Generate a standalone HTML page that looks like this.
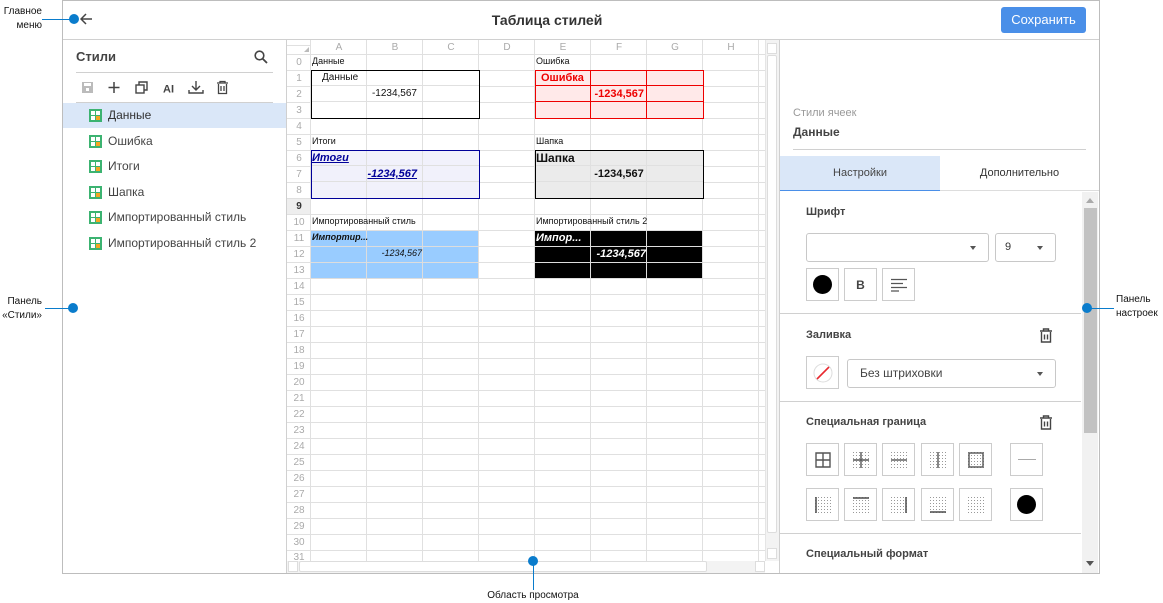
<!DOCTYPE html>
<html><head><meta charset="utf-8"><style>
*{box-sizing:border-box;margin:0;padding:0}
body{width:1163px;height:602px;background:#fff;font-family:"Liberation Sans",Arial,sans-serif;position:relative;overflow:hidden;color:#333}
.a{position:absolute}
.frame{left:62px;top:0;width:1038px;height:574px;border:1px solid #bdbdbd}
.ann{font-size:10px;color:#111;line-height:14px}
.dot{width:10px;height:10px;border-radius:50%;background:#0a7ccc}
.hl{height:1px;background:#0a7ccc}
.vl{width:1px;background:#0a7ccc}
.rn{position:absolute;left:287px;width:24px;text-align:center;font-size:10px;color:#aaa;height:16px;line-height:16px}
.ch{position:absolute;top:40px;height:15px;line-height:15px;width:56px;text-align:center;font-size:10px;color:#aaa}
.t{position:absolute;font-size:9px;color:#111;white-space:nowrap;line-height:16px}
.li{position:absolute;left:63px;width:223px;height:25px;font-size:12px;color:#444;line-height:25px;padding-left:45px}
.li svg{position:absolute;left:26px;top:6px}
.btn{position:absolute;width:33px;height:33px;border:1px solid #ccc;background:#fff;display:flex;align-items:center;justify-content:center}
.sel{position:absolute;border:1px solid #c8c8c8;border-radius:3px;height:29px;font-size:11px;color:#333;line-height:27px;padding-left:12px}
.sel:after{content:"";position:absolute;right:12px;top:12px;border-left:3px solid transparent;border-right:3px solid transparent;border-top:4px solid #555}
.h{position:absolute;left:806px;font-size:11px;font-weight:bold;color:#444}
.sep{position:absolute;left:780px;width:301px;height:1px;background:#d0d0d0}
.grid{background-image:repeating-linear-gradient(to right,transparent 0 55px,#e0e0e0 55px 56px),repeating-linear-gradient(to bottom,transparent 0 15px,#e0e0e0 15px 16px)}
</style></head><body>
<svg width="0" height="0" style="position:absolute"><defs><pattern id="dp" width="3" height="3" patternUnits="userSpaceOnUse"><rect width="1" height="1" fill="#999"/></pattern>
<symbol id="si" viewBox="0 0 13 13"><rect width="13" height="13" fill="#3cb371"/><rect x="2" y="2" width="4" height="4" fill="#fff"/><rect x="7" y="2" width="4" height="4" fill="#fff"/><rect x="2" y="7" width="4" height="4" fill="#fff"/><rect x="7" y="7" width="4" height="4" fill="#f5a623"/></symbol></defs></svg>

<div class="a frame"></div>
<div class="a" style="left:63px;top:39px;width:1036px;height:1px;background:#d0d0d0"></div>

<svg class="a" style="left:80px;top:13px" width="13" height="12" viewBox="0 0 13 12"><path d="M6 1L1 6L6 11M1 6H12" stroke="#444" stroke-width="1.5" fill="none"/></svg>
<div class="a" style="left:400px;width:294px;top:12px;text-align:center;font-size:14px;font-weight:bold;color:#333">Таблица стилей</div>
<div class="a" style="left:1001px;top:7px;width:85px;height:26px;background:#4a8fe8;border-radius:3px;color:#fff;font-size:13px;text-align:center;line-height:26px">Сохранить</div>

<div class="a" style="left:286px;top:40px;width:1px;height:533px;background:#d0d0d0"></div>
<div class="a" style="left:76px;top:49px;font-size:13px;font-weight:bold;color:#444">Стили</div>
<svg class="a" style="left:254px;top:50px" width="14" height="14" viewBox="0 0 14 14"><circle cx="5.5" cy="5.5" r="4.3" stroke="#444" stroke-width="1.6" fill="none"/><path d="M8.7 8.7L13 13" stroke="#444" stroke-width="1.8"/></svg>
<div class="a" style="left:76px;top:72px;width:197px;height:1px;background:#d0d0d0"></div>
<div class="a" style="left:76px;top:102px;width:197px;height:1px;background:#d0d0d0"></div>
<svg class="a" style="left:81px;top:80px" width="150" height="15" viewBox="0 0 150 15">
<rect x="1" y="2" width="11" height="11" fill="#bbb"/><rect x="3" y="3" width="7" height="3" fill="#fff"/><rect x="5" y="8" width="3" height="3" fill="#fff"/>
<path d="M33 2V13M27.5 7.5H38.5" stroke="#444" stroke-width="1.5"/>
<rect x="55" y="5" width="8" height="8" stroke="#444" stroke-width="1.4" fill="none"/><path d="M58 5V2H66V10H63" stroke="#444" stroke-width="1.4" fill="none"/>
<text x="82" y="12.5" font-family="Liberation Sans" font-weight="bold" font-size="11" fill="#444">AI</text>
<path d="M115 1V10M111 6L115 10L119 6M108 10V13H122V10" stroke="#444" stroke-width="1.4" fill="none"/>
<path d="M136 3H147M139 3V1.5H144V3M137.5 4V13.5H145.5V4M140 6V11M143 6V11" stroke="#444" stroke-width="1.3" fill="none"/>
</svg>
<div class="li" style="top:103px;background:#dae7f8;color:#333"><svg width="13" height="13"><use href="#si"/></svg>Данные</div>
<div class="li" style="top:128.5px"><svg width="13" height="13"><use href="#si"/></svg>Ошибка</div>
<div class="li" style="top:154px"><svg width="13" height="13"><use href="#si"/></svg>Итоги</div>
<div class="li" style="top:179.5px"><svg width="13" height="13"><use href="#si"/></svg>Шапка</div>
<div class="li" style="top:205px"><svg width="13" height="13"><use href="#si"/></svg>Импортированный стиль</div>
<div class="li" style="top:230.5px"><svg width="13" height="13"><use href="#si"/></svg>Импортированный стиль 2</div>

<!-- grid -->
<div class="a grid" style="left:311px;top:55px;width:454px;height:506px"></div>
<div class="a" style="left:311px;top:40px;width:454px;height:15px;border-bottom:1px solid #e0e0e0;background-image:repeating-linear-gradient(to right,transparent 0 55px,#e0e0e0 55px 56px)"></div>
<div class="a" style="left:287px;top:40px;width:24px;height:521px;border-right:1px solid #e0e0e0;background-image:repeating-linear-gradient(to bottom,transparent 0 15px,#e0e0e0 15px 16px);background-position:0 15px"></div>
<div class="a" style="left:287px;top:54px;width:24px;height:1px;background:#e0e0e0"></div>
<div class="a" style="left:287px;top:199px;width:23px;height:15px;background:#eee"></div>
<svg class="a" style="left:304px;top:47px" width="5" height="5"><path d="M5 0V5H0Z" fill="#bbb"/></svg>
<div class="ch" style="left:311px">A</div><div class="ch" style="left:367px">B</div><div class="ch" style="left:423px">C</div><div class="ch" style="left:479px">D</div><div class="ch" style="left:535px">E</div><div class="ch" style="left:591px">F</div><div class="ch" style="left:647px">G</div><div class="ch" style="left:703px">H</div>
<div class="rn" style="top:55px">0</div><div class="rn" style="top:71px">1</div><div class="rn" style="top:87px">2</div><div class="rn" style="top:103px">3</div><div class="rn" style="top:119px">4</div><div class="rn" style="top:135px">5</div><div class="rn" style="top:151px">6</div><div class="rn" style="top:167px">7</div><div class="rn" style="top:183px">8</div><div class="rn" style="top:199px;color:#333;font-weight:bold">9</div><div class="rn" style="top:215px">10</div><div class="rn" style="top:231px">11</div><div class="rn" style="top:247px">12</div><div class="rn" style="top:263px">13</div><div class="rn" style="top:279px">14</div><div class="rn" style="top:295px">15</div><div class="rn" style="top:311px">16</div><div class="rn" style="top:327px">17</div><div class="rn" style="top:343px">18</div><div class="rn" style="top:359px">19</div><div class="rn" style="top:375px">20</div><div class="rn" style="top:391px">21</div><div class="rn" style="top:407px">22</div><div class="rn" style="top:423px">23</div><div class="rn" style="top:439px">24</div><div class="rn" style="top:455px">25</div><div class="rn" style="top:471px">26</div><div class="rn" style="top:487px">27</div><div class="rn" style="top:503px">28</div><div class="rn" style="top:519px">29</div><div class="rn" style="top:535px">30</div><div class="rn" style="top:551px;height:10px;overflow:hidden;line-height:14px">31</div>

<div class="t" style="left:312px;top:53px">Данные</div>
<div class="t" style="left:536px;top:53px">Ошибка</div>
<div class="t" style="left:312px;top:133px">Итоги</div>
<div class="t" style="left:536px;top:133px">Шапка</div>
<div class="t" style="left:312px;top:213px">Импортированный стиль</div>
<div class="t" style="left:536px;top:213px">Импортированный стиль 2</div>

<div class="a grid" style="left:311px;top:70px;width:169px;height:49px;border:1px solid #000;background-color:#fff;background-position:-1px -1px"></div>
<div class="t" style="left:322px;top:70px;font-size:10px">Данные</div>
<div class="t" style="left:367px;width:50px;text-align:right;top:86px;font-size:10px">-1234,567</div>

<div class="a" style="left:535px;top:70px;width:169px;height:49px;border:1px solid #e00;background:#ffe9e9;background-image:repeating-linear-gradient(to right,transparent 0 55px,#e00 55px 56px),repeating-linear-gradient(to bottom,transparent 0 15px,#e00 15px 16px);background-position:-1px -1px"></div>
<div class="t" style="left:541px;top:70px;font-size:11px;color:#e00;font-weight:bold">Ошибка</div>
<div class="t" style="left:591px;width:53px;text-align:right;top:86px;font-size:11px;color:#e00;font-weight:bold">-1234,567</div>

<div class="a grid" style="left:311px;top:150px;width:169px;height:49px;border:1px solid #000099;background-color:#f1f1fb;background-position:-1px -1px"></div>
<div class="t" style="left:312px;top:150px;font-size:11px;color:#000099;font-weight:bold;font-style:italic;text-decoration:underline">Итоги</div>
<div class="t" style="left:367px;width:50px;text-align:right;top:166px;font-size:11px;color:#000099;font-weight:bold;font-style:italic;text-decoration:underline">-1234,567</div>

<div class="a grid" style="left:535px;top:150px;width:169px;height:49px;border:1px solid #000;background-color:#ebebeb;background-position:-1px -1px"></div>
<div class="t" style="left:536px;top:150px;font-size:12px;font-weight:bold">Шапка</div>
<div class="t" style="left:591px;width:56px;text-align:center;top:166px;font-size:11px;font-weight:bold">-1234,567</div>

<div class="a" style="left:311px;top:231px;width:168px;height:48px;background:#99ccff;background-image:repeating-linear-gradient(to right,transparent 0 55px,#ddd 55px 56px),repeating-linear-gradient(to bottom,transparent 0 15px,#ddd 15px 16px)"></div>
<div class="t" style="left:312px;top:229px;font-size:9px;font-weight:bold;font-style:italic">Импортир...</div>
<div class="t" style="left:367px;width:55px;text-align:right;top:245px;font-size:9px;font-style:italic">-1234,567</div>

<div class="a" style="left:535px;top:231px;width:168px;height:48px;background:#000;background-image:repeating-linear-gradient(to right,transparent 0 55px,#ddd 55px 56px),repeating-linear-gradient(to bottom,transparent 0 15px,#ddd 15px 16px)"></div>
<div class="t" style="left:536px;top:230px;font-size:11px;font-weight:bold;font-style:italic;color:#fff">Импор...</div>
<div class="t" style="left:591px;width:55px;text-align:right;top:246px;font-size:11px;font-weight:bold;font-style:italic;color:#fff">-1234,567</div>

<div class="a" style="left:765px;top:40px;width:14px;height:521px;background:#f3f3f3;border-left:1px solid #e5e5e5"></div>
<div class="a" style="left:767px;top:43px;width:10px;height:11px;background:#fff;border:1px solid #ddd"></div>
<div class="a" style="left:767px;top:55px;width:10px;height:478px;background:#fff;border:1px solid #ddd;border-radius:2px"></div>
<div class="a" style="left:767px;top:548px;width:10px;height:11px;background:#fff;border:1px solid #ddd"></div>
<div class="a" style="left:287px;top:561px;width:478px;height:12px;background:#f3f3f3"></div>
<div class="a" style="left:288px;top:561px;width:10px;height:11px;background:#fff;border:1px solid #ddd"></div>
<div class="a" style="left:299px;top:561px;width:408px;height:11px;background:#fff;border:1px solid #ddd;border-radius:2px"></div>
<div class="a" style="left:755px;top:561px;width:10px;height:11px;background:#fff;border:1px solid #ddd"></div>

<div class="a" style="left:779px;top:40px;width:1px;height:533px;background:#d0d0d0"></div>
<div class="a" style="left:793px;top:107px;font-size:11px;color:#999">Стили ячеек</div>
<div class="a" style="left:793px;top:125px;font-size:12px;font-weight:bold;color:#444">Данные</div>
<div class="a" style="left:793px;top:149px;width:293px;height:1px;background:#d0d0d0"></div>
<div class="a" style="left:780px;top:156px;width:160px;height:35px;background:#dae7f8;border-bottom:1px solid #4a8fe8;text-align:center;line-height:35px;font-size:11px;color:#444">Настройки</div>
<div class="a" style="left:940px;top:156px;width:159px;height:35px;text-align:center;line-height:35px;font-size:11px;color:#333;border-bottom:1px solid #ddd">Дополнительно</div>
<div class="a" style="left:1082px;top:192px;width:16px;height:381px;background:#f1f1f1"></div>
<div class="a" style="left:1084px;top:208px;width:13px;height:225px;background:#c2c2c2"></div>
<svg class="a" style="left:1086px;top:198px" width="8" height="5"><path d="M0 5L4 0L8 5Z" fill="#aaa"/></svg>
<svg class="a" style="left:1086px;top:561px" width="8" height="5"><path d="M0 0L4 5L8 0Z" fill="#555"/></svg>

<div class="h" style="top:206px">Шрифт</div>
<div class="sel" style="left:806px;top:233px;width:183px"></div>
<div class="sel" style="left:995px;top:233px;width:61px;padding-left:9px">9</div>
<div class="btn" style="left:806px;top:268px"><div style="width:19px;height:19px;border-radius:50%;background:#000"></div></div>
<div class="btn" style="left:844px;top:268px;font-weight:bold;font-size:12px;color:#444">B</div>
<div class="btn" style="left:882px;top:268px"><svg width="18" height="14"><path d="M1 1.5H17M1 5.5H13M1 9.5H17M1 13H9" stroke="#555" stroke-width="1.2"/></svg></div>
<div class="sep" style="top:313px"></div>

<div class="h" style="top:329px">Заливка</div>
<svg class="a" style="left:1039px;top:328px" width="14" height="15" viewBox="0 0 14 15"><path d="M1 3H13M4.5 3V1H9.5V3M2.5 4V14H11.5V4M5.5 6.5V11.5M8.5 6.5V11.5" stroke="#444" stroke-width="1.4" fill="none"/></svg>
<div class="btn" style="left:806px;top:356px"><svg width="20" height="20"><circle cx="10" cy="10" r="9" fill="#fff" stroke="#ddd"/><path d="M4 16L16 4" stroke="#e8282f" stroke-width="1.6"/></svg></div>
<div class="sel" style="left:847px;top:359px;width:209px;font-size:12px;color:#444">Без штриховки</div>
<div class="sep" style="top:401px"></div>

<div class="h" style="top:416px">Специальная граница</div>
<svg class="a" style="left:1039px;top:415px" width="14" height="15" viewBox="0 0 14 15"><path d="M1 3H13M4.5 3V1H9.5V3M2.5 4V14H11.5V4M5.5 6.5V11.5M8.5 6.5V11.5" stroke="#444" stroke-width="1.4" fill="none"/></svg>
<div class="btn" style="left:806px;top:443px"><svg width="16" height="16"><path d="M1 1H15V15H1ZM8 1V15M1 8H15" stroke="#555" stroke-width="1.4" fill="none"/></svg></div>
<div class="btn" style="left:844px;top:443px"><svg width="16" height="16"><rect width="16" height="16" fill="url(#dp)"/><path d="M8 0V16M0 8H16" stroke="#555" stroke-width="1.4"/></svg></div>
<div class="btn" style="left:882px;top:443px"><svg width="16" height="16"><rect width="16" height="16" fill="url(#dp)"/><path d="M0 8H16" stroke="#555" stroke-width="1.4"/></svg></div>
<div class="btn" style="left:921px;top:443px"><svg width="16" height="16"><rect width="16" height="16" fill="url(#dp)"/><path d="M8 0V16" stroke="#555" stroke-width="1.4"/></svg></div>
<div class="btn" style="left:959px;top:443px"><svg width="16" height="16"><rect width="16" height="16" fill="url(#dp)"/><rect x="1" y="1" width="14" height="14" stroke="#555" stroke-width="1.4" fill="none"/></svg></div>
<div class="btn" style="left:1010px;top:443px"><div style="width:18px;height:1px;background:#aaa"></div></div>
<div class="btn" style="left:806px;top:488px"><svg width="16" height="16"><rect width="16" height="16" fill="url(#dp)"/><path d="M1 0V16" stroke="#555" stroke-width="1.6"/></svg></div>
<div class="btn" style="left:844px;top:488px"><svg width="16" height="16"><rect width="16" height="16" fill="url(#dp)"/><path d="M0 1H16" stroke="#555" stroke-width="1.6"/></svg></div>
<div class="btn" style="left:882px;top:488px"><svg width="16" height="16"><rect width="16" height="16" fill="url(#dp)"/><path d="M15 0V16" stroke="#555" stroke-width="1.6"/></svg></div>
<div class="btn" style="left:921px;top:488px"><svg width="16" height="16"><rect width="16" height="16" fill="url(#dp)"/><path d="M0 15H16" stroke="#555" stroke-width="1.6"/></svg></div>
<div class="btn" style="left:959px;top:488px"><svg width="16" height="16"><rect width="16" height="16" fill="url(#dp)"/></svg></div>
<div class="btn" style="left:1010px;top:488px"><div style="width:19px;height:19px;border-radius:50%;background:#000"></div></div>
<div class="sep" style="top:533px"></div>
<div class="h" style="top:548px">Специальный формат</div>

<div class="a ann" style="left:0;top:5px;width:42px;text-align:right">Главное<br>меню</div>
<div class="a hl" style="left:42px;top:19px;width:30px"></div>
<div class="a dot" style="left:69px;top:14px"></div>
<div class="a ann" style="left:0;top:295px;width:42px;text-align:right">Панель<br>«Стили»</div>
<div class="a hl" style="left:45px;top:308px;width:26px"></div>
<div class="a dot" style="left:68px;top:303px"></div>
<div class="a ann" style="left:1116px;top:293px">Панель<br>настроек</div>
<div class="a hl" style="left:1090px;top:308px;width:24px"></div>
<div class="a dot" style="left:1082px;top:303px"></div>
<div class="a vl" style="left:533px;top:562px;height:28px"></div>
<div class="a dot" style="left:528px;top:556px"></div>
<div class="a ann" style="left:440px;width:186px;text-align:center;top:589px">Область просмотра</div>
</body></html>
